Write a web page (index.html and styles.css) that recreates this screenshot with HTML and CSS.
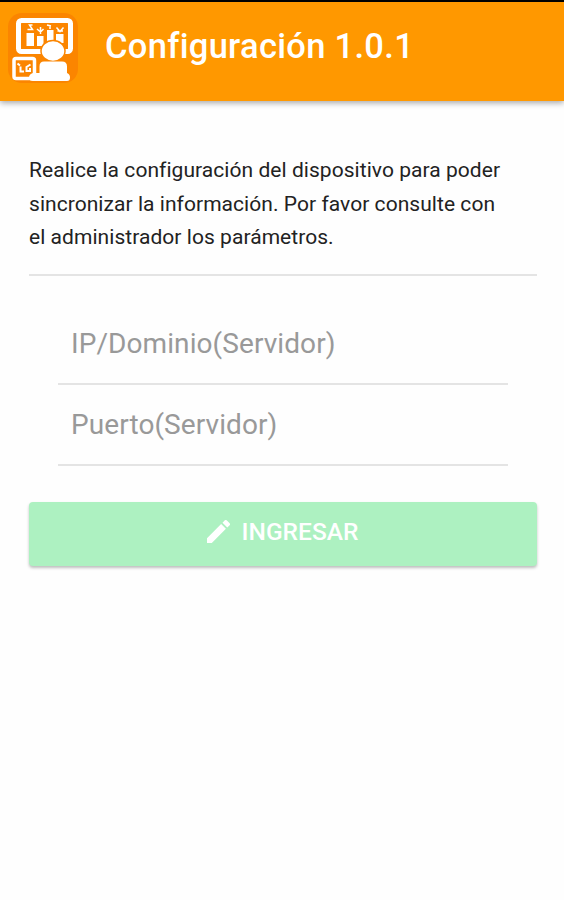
FILE: index.html
```html
<!DOCTYPE html>
<html lang="es">
<head>
    <meta charset="UTF-8">
    <meta name="viewport" content="width=device-width, initial-scale=1.0">
    <title>Configuración</title>
    <link rel="stylesheet" href="styles.css">
</head>
<body>
    <header>
        <svg class="logo" viewBox="0 0 70 70" aria-hidden="true">
            <rect width="70" height="70" rx="14" fill="#fb8500"/>
            <!-- board with bars -->
            <rect x="10.500" y="7.500" width="52" height="31" rx="3" fill="none" stroke="#fff" stroke-width="5"/>
            <g fill="#fff">
                <rect x="18.500" y="20" width="7.500" height="13"/>
                <rect x="29" y="23" width="6.500" height="10"/>
                <rect x="39" y="17" width="6.500" height="14"/>
                <rect x="48" y="21" width="7.500" height="9"/>
            </g>
            <g fill="none" stroke="#fff" stroke-width="1.500">
                <path d="M24.500 12h-3l3 4.500h-5M29 16l3.500 3 3-3M32.500 14v7M39 12l4 1M42 12v4M48.500 14.500l3.500 4 3.500-4M49.500 18h5.500"/>
            </g>
            <!-- tablet -->
            <rect x="6" y="45.500" width="20.500" height="20" rx="2" fill="#fb8500" stroke="#fff" stroke-width="3.500"/>
            <path d="M9.500 50.500l2.500 2M12.500 53.500v5h3.500M22.500 51.500l-4 2.500v4h3.500v-3" fill="none" stroke="#fff" stroke-width="2"/>
            <!-- person -->
            <g fill="#fff">
                <ellipse cx="45" cy="38" rx="12" ry="10.500" stroke="#fb8500" stroke-width="1.500"/>
                <path d="M36 48.500h18q5 0 5 5V60q3 1 3 4.500t-3 3.500H25q-4 0-4-3.500T25 60h6.500v-6.500q0-5 4.500-5z"/>
            </g>
        </svg>
        <h1>Configuración 1.0.1</h1>
    </header>

    <main>
        <p>Realice la configuración del dispositivo para poder<br>sincronizar la información. Por favor consulte con<br>el administrador los parámetros.</p>
        <form>
            <div class="fields">
                <input type="text" placeholder="IP/Dominio(Servidor)" aria-label="IP/Dominio(Servidor)">
                <input type="text" placeholder="Puerto(Servidor)" aria-label="Puerto(Servidor)">
            </div>
            <button type="submit">
                <svg class="icon" viewBox="3 3 18 18" aria-hidden="true">
                    <path fill="#fff" d="M3 17.250V21h3.750L17.810 9.940l-3.750-3.750L3 17.250zM20.710 7.040a1 1 0 0 0 0-1.410l-2.340-2.340a1 1 0 0 0-1.410 0l-1.830 1.830 3.750 3.750 1.830-1.830z"/>
                </svg>
                <span>INGRESAR</span>
            </button>
        </form>
    </main>
</body>
</html>
```

FILE: styles.css
```css
* {
    box-sizing: border-box;
}
body {
    font-family: Roboto, "Liberation Sans", sans-serif;
    margin: 0;
    min-height: 100vh;
    background: #fefefe;
    color: #222;
}
header {
    display: flex;
    align-items: flex-start;
    gap: 28px;
    height: 101px;
    padding: 11px 8px 0;
    background: #ff9800;
    border-top: 2px solid #000;
    box-shadow: 0 2px 6px rgba(0, 0, 0, 0.35);
}
.logo {
    width: 70px;
    height: 70px;
    flex: none;
}
h1 {
    margin: 13px 0 0 -1px;
    font-size: 34.5px;
    font-weight: 500;
    line-height: 40px;
    letter-spacing: 0.3px;
    color: #fff;
    white-space: nowrap;
}
main {
    padding: 53px 27px 0 29px;
}
p {
    margin: 0;
    padding-bottom: 19px;
    border-bottom: 2px solid #e4e4e4;
    font-size: 21px;
    line-height: 33.5px;
    letter-spacing: 0.05px;
    white-space: nowrap;
}
.fields {
    display: flex;
    flex-direction: column;
    padding: 28px 29px 0;
}
input {
    height: 81px;
    padding: 0 13px;
    border: none;
    border-bottom: 2px solid #e4e4e4;
    background: none;
    font-family: inherit;
    font-size: 28px;
    letter-spacing: 0.08px;
    outline: none;
}
input::placeholder {
    color: #999;
    opacity: 1;
}
button {
    display: flex;
    align-items: center;
    justify-content: center;
    gap: 12px;
    width: 100%;
    height: 64px;
    margin-top: 36px;
    padding: 0 1px 4px 0;
    border: none;
    border-radius: 4px;
    background: #adf1c1;
    box-shadow: 0 2px 3px rgba(0, 0, 0, 0.25);
    color: #fff;
    font-family: inherit;
    font-size: 24.5px;
    font-weight: 500;
}
.icon {
    width: 23px;
    height: 23px;
}
```
